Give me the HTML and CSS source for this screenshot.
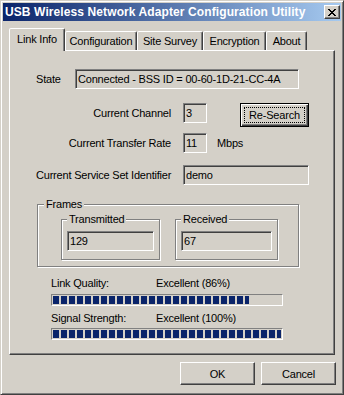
FILE: index.html
```html
<!DOCTYPE html>
<html lang="en">
<head>
    <meta charset="UTF-8">
    <title>USB Wireless Network Adapter Configuration Utility</title>
    <link rel="stylesheet" href="styles.css">
</head>
<body>
    <div class="window">
        <div class="titlebar">
            <span class="title">USB Wireless Network Adapter Configuration Utility</span>
            <button class="close-btn" title="Close">
                <svg width="8" height="7" viewBox="0 0 8 7" shape-rendering="crispEdges">
                    <path d="M0 0h2v1h-2z M6 0h2v1h-2z M1 1h2v1h-2z M5 1h2v1h-2z M2 2h4v1h-4z M3 3h2v1h-2z M2 4h4v1h-4z M1 5h2v1h-2z M5 5h2v1h-2z M0 6h2v1h-2z M6 6h2v1h-2z" fill="#000"/>
                </svg>
            </button>
        </div>
        <div class="dialog-body">
            <div class="tabs">
                <div class="tab selected tab-link">Link Info</div>
                <div class="tab tab-config">Configuration</div>
                <div class="tab tab-survey">Site Survey</div>
                <div class="tab tab-encrypt">Encryption</div>
                <div class="tab tab-about">About</div>
            </div>
            <div class="panel">
                <div class="state-row">
                    <span class="state-label">State</span>
                    <div class="field state-field">Connected - BSS ID = 00-60-1D-21-CC-4A</div>
                </div>
                <div class="form-row first-row">
                    <span class="form-label">Current Channel</span>
                    <div class="field small-field">3</div>
                    <button class="btn default-btn"><span class="focus">Re-Search</span></button>
                </div>
                <div class="form-row rate-row">
                    <span class="form-label">Current Transfer Rate</span>
                    <div class="field small-field">11</div>
                    <span class="unit">Mbps</span>
                </div>
                <div class="form-row ssid-row">
                    <span class="form-label">Current Service Set Identifier</span>
                    <div class="field ssid-field">demo</div>
                </div>
                <fieldset class="group frames">
                    <legend>Frames</legend>
                    <div class="frames-inner">
                        <fieldset class="group counter counter-tx">
                            <legend>Transmitted</legend>
                            <div class="field">129</div>
                        </fieldset>
                        <fieldset class="group counter counter-rx">
                            <legend>Received</legend>
                            <div class="field">67</div>
                        </fieldset>
                    </div>
                </fieldset>
                <div class="meter">
                    <div class="meter-text">
                        <span class="meter-name">Link Quality:</span>
                        <span>Excellent (86%)</span>
                    </div>
                    <div class="meter-bar"><div class="meter-fill" style="width: 86%"></div></div>
                </div>
                <div class="meter meter-second">
                    <div class="meter-text">
                        <span class="meter-name">Signal Strength:</span>
                        <span>Excellent (100%)</span>
                    </div>
                    <div class="meter-bar"><div class="meter-fill" style="width: 100%"></div></div>
                </div>
            </div>
            <div class="buttons">
                <button class="btn">OK</button>
                <button class="btn">Cancel</button>
            </div>
        </div>
    </div>
</body>
</html>
```

FILE: styles.css
```css
body {
    margin: 0;
    font-family: "Liberation Sans", Arial, sans-serif;
    font-size: 11px;
    line-height: 13px;
    letter-spacing: -0.2px;
    color: #000;
    background: #d4d0c8;
}
.window {
    box-sizing: border-box;
    width: 344px;
    height: 395px;
    padding: 2px;
    border: 1px solid;
    border-color: #d4d0c8 #404040 #404040 #d4d0c8;
    box-shadow: inset 1px 1px #fff, inset -1px -1px #808080;
    background: #d4d0c8;
}
.titlebar {
    display: flex;
    align-items: center;
    justify-content: space-between;
    height: 18px;
    padding: 0 1px 0 2px;
    background: linear-gradient(to right, #0a246a, #a6caf0);
}
.title {
    color: #fff;
    font-weight: bold;
    font-size: 12px;
    letter-spacing: 0.1px;
    white-space: nowrap;
}
.close-btn {
    box-sizing: border-box;
    width: 16px;
    height: 14px;
    padding: 0;
    display: flex;
    align-items: center;
    justify-content: center;
    border: 1px solid;
    border-color: #fff #404040 #404040 #fff;
    box-shadow: inset -1px -1px #808080;
    background: #d4d0c8;
}
.close-btn svg {
    display: block;
    margin-left: -1px;
}
.dialog-body {
    padding: 7px 5px 0 6px;
}

/* tab strip */
.tabs {
    display: flex;
    align-items: flex-end;
    height: 22px;
    padding-left: 2px;
}
.tab {
    box-sizing: border-box;
    height: 19px;
    padding-top: 3px;
    text-align: center;
    white-space: nowrap;
    border: 1px solid;
    border-bottom: none;
    border-color: #fff #404040 transparent #fff;
    border-radius: 2px 2px 0 0;
    box-shadow: inset -1px 0 #808080;
    background: #d4d0c8;
}
.tab.selected {
    position: relative;
    z-index: 1;
    height: 23px;
    margin: 0 0 -1px -2px;
    padding-top: 4px;
}
.tab-link { width: 56px; }
.tab-config { width: 72px; }
.tab-survey { width: 66px; }
.tab-encrypt { width: 63px; }
.tab-about { width: 41px; }

.panel {
    box-sizing: border-box;
    width: 326px;
    height: 305px;
    padding: 18px 0 0 0;
    border: 1px solid;
    border-color: #fff #404040 #404040 #fff;
    box-shadow: inset -1px -1px #808080;
}

/* sunken read-only edit */
.field {
    box-sizing: border-box;
    height: 20px;
    padding-left: 2px;
    line-height: 18px;
    border: 1px solid;
    border-color: #808080 #fff #fff #808080;
    box-shadow: inset 1px 1px #404040;
    white-space: nowrap;
}
.state-row {
    display: flex;
    align-items: center;
    margin-left: 26px;
}
.state-label {
    width: 39px;
}
.state-field {
    width: 224px;
}
.form-row {
    display: flex;
    align-items: flex-start;
    margin-left: 26px;
}
.form-row .form-label {
    width: 135px;
    line-height: 20px;
    text-align: right;
    white-space: nowrap;
}
.form-row .field {
    margin-left: 12px;
}
.first-row { margin-top: 14px; }
.rate-row { margin-top: 6px; }
.ssid-row { margin-top: 12px; }
.small-field { width: 24px; }
.ssid-field { width: 126px; }
.unit {
    margin-left: 10px;
    line-height: 20px;
}

/* buttons */
.btn {
    box-sizing: border-box;
    width: 75px;
    height: 23px;
    padding: 0;
    font-family: inherit;
    font-size: 11px;
    letter-spacing: inherit;
    color: #000;
    background: #d4d0c8;
    border: 1px solid;
    border-color: #fff #404040 #404040 #fff;
    box-shadow: inset -1px -1px #808080;
}
.default-btn {
    width: 69px;
    height: 24px;
    margin-left: 33px;
    padding: 3px;
    border-color: #000;
    box-shadow: inset 1px 1px #fff, inset -1px -1px #404040, inset -2px -2px #808080;
}
.default-btn .focus {
    display: block;
    height: 16px;
    line-height: 14px;
    box-sizing: border-box;
    border: 1px dotted #000;
}

/* group boxes */
.group {
    margin: 0;
    min-width: 0;
    border: 1px solid #808080;
    box-shadow: inset 1px 1px #fff, 1px 1px #fff;
}
.group legend {
    padding: 0 2px;
    line-height: 13px;
    background: #d4d0c8;
}
.frames {
    box-sizing: border-box;
    width: 262px;
    margin: 13px 0 0 27px;
    padding: 0 6px 6px;
}
.frames-inner {
    display: flex;
    margin-left: 17px;
    padding-top: 2px;
    gap: 15px;
}
.counter {
    box-sizing: border-box;
    padding: 5px 5px 8px;
}
.counter-tx { width: 99px; }
.counter-rx { width: 103px; }
.counter .field {
    width: 100%;
}

/* meters */
.meter {
    margin: 10px 0 0 41px;
}
.meter-second {
    margin-top: 6px;
}
.meter-text {
    display: flex;
    margin-bottom: 4px;
}
.meter-second .meter-text {
    margin-bottom: 3px;
}
.meter-name {
    width: 105px;
}
.meter-bar {
    box-sizing: border-box;
    width: 232px;
    height: 12px;
    padding: 1px;
    border: 1px solid;
    border-color: #808080 #fff #fff #808080;
}
.meter-fill {
    height: 8px;
    background: repeating-linear-gradient(to right, #0a246a 0 6px, transparent 6px 8px);
}

.buttons {
    display: flex;
    justify-content: flex-end;
    gap: 6px;
    margin-top: 7px;
}
```
